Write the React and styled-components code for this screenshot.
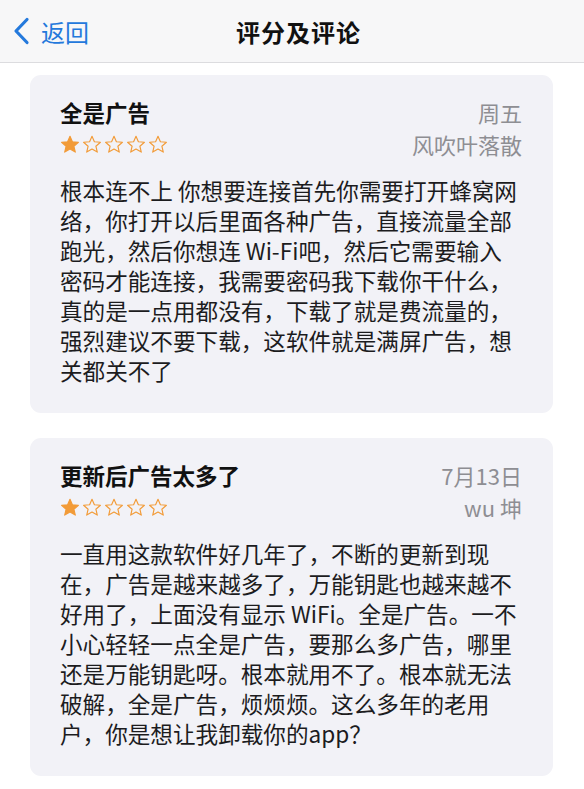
import styled, { createGlobalStyle } from 'styled-components';

const GlobalStyle = createGlobalStyle`
  html, body {
    margin: 0;
    padding: 0;
    background: #ffffff;
  }
  body {
    font-family: "Noto Sans CJK SC", "Noto Sans", "Liberation Sans", sans-serif;
    color: #1c1c1e;
    -webkit-font-smoothing: antialiased;
  }
`;

const reviews = [
  {
    title: '全是广告',
    date: '周五',
    author: '风吹叶落散',
    rating: 1,
    lines: [
      '根本连不上 你想要连接首先你需要打开蜂窝网',
      '络，你打开以后里面各种广告，直接流量全部',
      '跑光，然后你想连 Wi-Fi吧，然后它需要输入',
      '密码才能连接，我需要密码我下载你干什么，',
      '真的是一点用都没有，下载了就是费流量的，',
      '强烈建议不要下载，这软件就是满屏广告，想',
      '关都关不了',
    ],
  },
  {
    title: '更新后广告太多了',
    date: '7月13日',
    author: 'wu 坤',
    rating: 1,
    lines: [
      '一直用这款软件好几年了，不断的更新到现',
      '在，广告是越来越多了，万能钥匙也越来越不',
      '好用了，上面没有显示 WiFi。全是广告。一不',
      '小心轻轻一点全是广告，要那么多广告，哪里',
      '还是万能钥匙呀。根本就用不了。根本就无法',
      '破解，全是广告，烦烦烦。这么多年的老用',
      '户，你是想让我卸载你的app？',
    ],
  },
];

const Page = styled.div`
  width: 584px;
  min-height: 789px;
  background: #ffffff;
`;

const NavBar = styled.header`
  height: 62px;
  display: grid;
  grid-template-columns: 1fr auto 1fr;
  align-items: center;
  background: #f7f7f8;
  border-bottom: 1px solid #dcdcdf;
  padding: 0 0 0 13px;
`;

const BackButton = styled.button`
  justify-self: start;
  display: flex;
  align-items: center;
  gap: 11px;
  padding: 0;
  border: none;
  background: none;
  color: #2479dc;
  font-family: inherit;
  font-size: 24px;
  cursor: pointer;
`;

const NavTitle = styled.h1`
  margin: 0;
  font-size: 24px;
  font-weight: 600;
  color: #111111;
  letter-spacing: 1px;
`;

const List = styled.main`
  display: flex;
  flex-direction: column;
  gap: 25px;
  padding: 12px 31px 0 30px;
`;

const Card = styled.article`
  background: #f2f2f7;
  border-radius: 11px;
  padding: 21px 31px 27px 30px;
`;

const CardHead = styled.div`
  display: grid;
  grid-template-columns: 1fr auto;
  grid-auto-rows: 32px;
  align-items: center;
`;

const Title = styled.h2`
  margin: 0;
  font-size: 22.5px;
  font-weight: 600;
  color: #111111;
`;

const Meta = styled.span`
  justify-self: end;
  font-size: 22px;
  color: #8e8e93;
`;

const Stars = styled.div`
  display: flex;
  gap: 2px;
`;

const Body = styled.p`
  margin: 16px 0 0;
  font-size: 22.6px;
  line-height: 30px;
  color: #1c1c1e;
`;

const Line = styled.span`
  display: block;
  white-space: nowrap;
`;

function Star({ filled }) {
  return (
    <svg width="20" height="19" viewBox="0 0 24 23">
      <path
        d="M12 1.5l2.9 6.7 7.3.6-5.5 4.8 1.7 7.1-6.4-3.8-6.4 3.8 1.7-7.1L1.8 8.8l7.3-.6z"
        fill={filled ? '#f29b38' : 'none'}
        stroke="#f29b38"
        strokeWidth="1.4"
        strokeLinejoin="round"
      />
    </svg>
  );
}

function Chevron() {
  return (
    <svg width="17" height="28" viewBox="0 0 17 28">
      <path
        d="M14 2.5L3 14l11 11.5"
        fill="none"
        stroke="#2479dc"
        strokeWidth="3.2"
        strokeLinecap="round"
        strokeLinejoin="round"
      />
    </svg>
  );
}

function Review({ review }) {
  return (
    <Card>
      <CardHead>
        <Title>{review.title}</Title>
        <Meta>{review.date}</Meta>
        <Stars>
          {[1, 2, 3, 4, 5].map((n) => (
            <Star key={n} filled={n <= review.rating} />
          ))}
        </Stars>
        <Meta>{review.author}</Meta>
      </CardHead>
      <Body>
        {review.lines.map((line, i) => (
          <Line key={i}>{line}</Line>
        ))}
      </Body>
    </Card>
  );
}

export default function App() {
  return (
    <Page>
      <GlobalStyle />
      <NavBar>
        <BackButton type="button">
          <Chevron />
          返回
        </BackButton>
        <NavTitle>评分及评论</NavTitle>
        <span />
      </NavBar>
      <List>
        {reviews.map((r) => (
          <Review key={r.title} review={r} />
        ))}
      </List>
    </Page>
  );
}
